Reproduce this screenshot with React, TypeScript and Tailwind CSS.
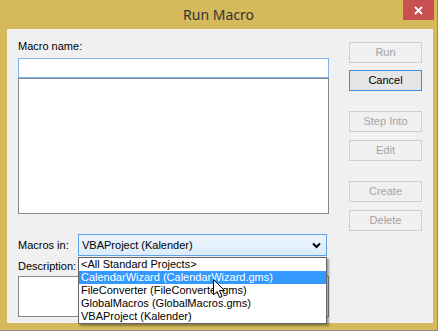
import React from "react";

const font = { fontFamily: '"Liberation Sans", Arial, sans-serif' };

function DlgButton({ label, primary, className }: { label: string; primary?: boolean; className?: string }) {
  return (
    <div
      className={
        "flex h-[21px] w-[73px] items-center justify-center border text-[11px] " +
        (primary
          ? "border-[#3c8ee6] bg-[#e5e5e5] text-black "
          : "border-[#cfcfcf] bg-[#f0f0f0] text-[#a3a3a3] ") +
        (className ?? "")
      }
    >
      {label}
    </div>
  );
}

const items = [
  "<All Standard Projects>",
  "CalendarWizard (CalendarWizard.gms)",
  "FileConverter (FileConverter.gms)",
  "GlobalMacros (GlobalMacros.gms)",
  "VBAProject (Kalender)",
];

export default function App() {
  return (
    <div className="relative h-[332px] w-[443px] overflow-hidden bg-white" style={font}>
      {/* window */}
      <div className="h-[331px] w-[438px] border-b border-r border-[#8a8a8a] bg-[#d5b95a]">
        <div className="relative flex h-[29px] items-center justify-center">
          <span className="text-[14px] text-[#333]" style={{ fontFamily: '"Noto Sans", "Open Sans", sans-serif' }}>
            Run Macro
          </span>
          <div className="absolute right-[3px] top-0 flex h-[20px] w-[31px] items-center justify-center bg-[#c75050]">
            <svg width="9" height="9" viewBox="0 0 9 9">
              <path d="M1 1 L8 8 M8 1 L1 8" stroke="white" strokeWidth="1.8" />
            </svg>
          </div>
        </div>

        {/* client area */}
        <div className="relative ml-[7px] flex h-[294px] w-[426px] bg-[#f0f0f0] pl-[11px] pr-[11px]">
          {/* left column */}
          <div className="flex w-[311px] flex-col text-[11px] text-black">
            <div className="mt-[11px] leading-[13px]">Macro name:</div>
            <div className="mt-[5px] h-[20px] border border-[#7eb4ea] bg-white" />
            <div className="h-[136px] border border-[#828790] bg-white" />
            <div className="mt-[20px] flex h-[22px] items-center">
              <span className="w-[60px]">Macros in:</span>
              <div className="flex h-[22px] w-[249px] items-center justify-between border border-[#5fa0e6] bg-gradient-to-b from-[#ecf4fc] to-[#dcecfc] pl-[3px] pr-[5px]">
                <span>VBAProject (Kalender)</span>
                <svg width="9" height="7" viewBox="0 0 9 7">
                  <path d="M1 1.5 L4.5 5 L8 1.5" stroke="black" strokeWidth="2" fill="none" />
                </svg>
              </div>
            </div>
            <div className="mt-[4px] leading-[13px]">Description:</div>
            <div className="mt-[3px] h-[41px] border border-[#828790] bg-white" />
          </div>

          {/* buttons */}
          <div className="ml-[20px] flex flex-col">
            <DlgButton label="Run" className="mt-[13px]" />
            <DlgButton label="Cancel" primary className="mt-[7px]" />
            <DlgButton label="Step Into" className="mt-[20px]" />
            <DlgButton label="Edit" className="mt-[8px]" />
            <DlgButton label="Create" className="mt-[20px]" />
            <DlgButton label="Delete" className="mt-[8px]" />
          </div>

          {/* dropdown list */}
          <div className="absolute left-[71px] top-[228px] w-[249px] border border-[#646464] bg-white text-[11px] shadow-[2px_2px_2px_rgba(0,0,0,0.35)]">
            {items.map((t, i) => (
              <div
                key={t}
                className={
                  "h-[13px] pl-[2px] leading-[13px] " + (i === 1 ? "bg-[#3399ff] text-white" : "text-black")
                }
              >
                {t}
              </div>
            ))}
          </div>

          {/* mouse cursor */}
          <svg className="absolute left-[206px] top-[250px]" width="13" height="20" viewBox="0 0 13 20">
            <path
              d="M0.5 0.5 L0.5 16 L4 12.5 L6.5 18.5 L9 17.5 L6.5 11.5 L11.5 11.5 Z"
              fill="white"
              stroke="black"
              strokeWidth="1"
            />
          </svg>
        </div>
      </div>
    </div>
  );
}
